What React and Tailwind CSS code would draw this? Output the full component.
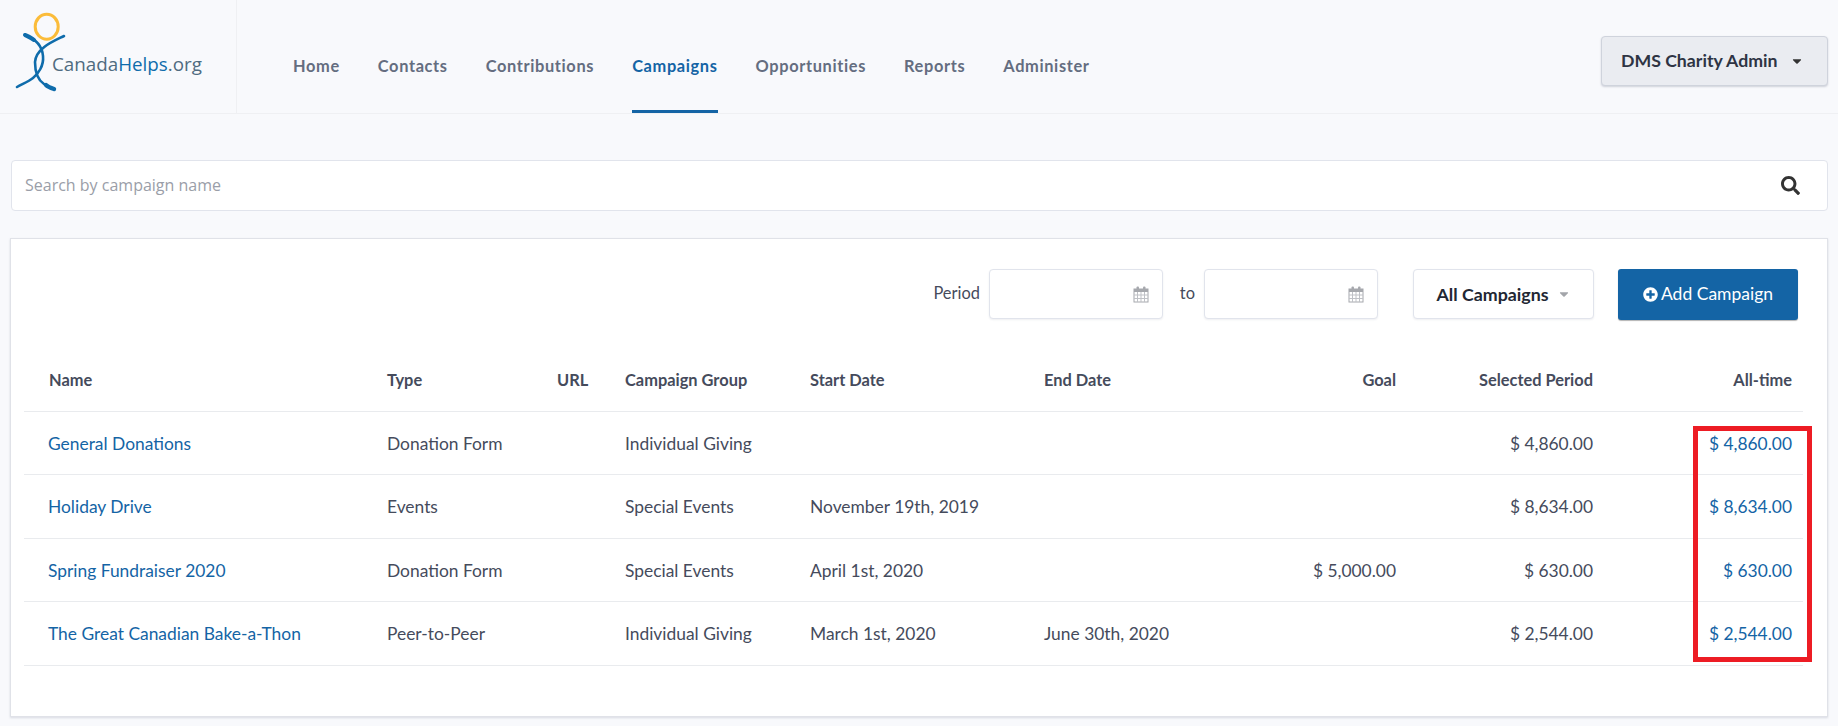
import { FaSearch, FaPlusCircle, FaCaretDown } from "react-icons/fa";

const navItems = ["Home", "Contacts", "Contributions", "Campaigns", "Opportunities", "Reports", "Administer"];

const rows = [
  { name: "General Donations", type: "Donation Form", group: "Individual Giving", start: "", end: "", goal: "", period: "$ 4,860.00", all: "$ 4,860.00" },
  { name: "Holiday Drive", type: "Events", group: "Special Events", start: "November 19th, 2019", end: "", goal: "", period: "$ 8,634.00", all: "$ 8,634.00" },
  { name: "Spring Fundraiser 2020", type: "Donation Form", group: "Special Events", start: "April 1st, 2020", end: "", goal: "$ 5,000.00", period: "$ 630.00", all: "$ 630.00" },
  { name: "The Great Canadian Bake-a-Thon", type: "Peer-to-Peer", group: "Individual Giving", start: "March 1st, 2020", end: "June 30th, 2020", goal: "", period: "$ 2,544.00", all: "$ 2,544.00" },
];

const Logo = () => (
  <div className="flex items-start">
    <svg width="70" height="100" viewBox="0 0 70 100" className="shrink-0" fill="none" strokeLinecap="round">
      <ellipse cx="46.7" cy="26.7" rx="11.5" ry="12.5" stroke="#fbbc3a" strokeWidth="3" />
      <path d="M25 35C33 38 42 44 43 56C44 66 38 74 33 78C28 82 22 84 17 87" stroke="#0f6cab" strokeWidth="2.6" />
      <path d="M64 36C54 41 36 48 35 62C35 72 38 80 44 84C47 86 50 88 54 89" stroke="#0f6cab" strokeWidth="2.6" />
      <path d="M25 35C28 36 31 38 34 40" stroke="#0f6cab" strokeWidth="4" />
      <path d="M46 85C48 87 51 88 54 89" stroke="#0f6cab" strokeWidth="4.4" />
    </svg>
    <span className="-ml-[18px] mt-[51px] font-['Open_Sans',sans-serif] text-[18.8px] leading-[26px] text-[#4f6b80]">
      Canada<span className="text-[#0f6cab]">Helps</span>.org
    </span>
  </div>
);

const Calendar = () => (
  <svg width="16" height="17" viewBox="0 0 16 17" className="shrink-0">
    <rect x="1" y="3" width="14" height="13" fill="none" stroke="#a6a8ad" strokeWidth="1" />
    <rect x="1" y="3" width="14" height="3" fill="#a6a8ad" />
    <rect x="3.5" y="0.5" width="2.5" height="4.5" rx="1" fill="#a6a8ad" />
    <rect x="10" y="0.5" width="2.5" height="4.5" rx="1" fill="#a6a8ad" />
    <path d="M1 9h14M1 12.5h14M4.5 6v10M8 6v10M11.5 6v10" stroke="#bfc1c6" strokeWidth="1" />
  </svg>
);

const DateInput = () => (
  <div className="flex h-[50px] w-[174px] items-center justify-end rounded-[4px] border border-[#e1e4ec] bg-white pr-[13px] shadow-[0_1px_2px_rgba(40,50,80,0.08)]">
    <Calendar />
  </div>
);

export default function App() {
  return (
    <div className="min-h-screen bg-[#f8f9fc] font-['Lato',sans-serif] text-[#454b5c]">
      {/* Header */}
      <header className="flex h-[114px] items-stretch border-b border-[#eff0f3]">
        <div className="w-[237px] shrink-0 border-r border-[#eff0f3]">
          <Logo />
        </div>
        <nav className="ml-[56px] flex gap-[38px]">
          {navItems.map((item) => (
            <a
              key={item}
              className={`flex h-[113px] items-center border-b-[3px] pt-[22px] text-[16.4px] font-bold tracking-[0.63px] ${
                item === "Campaigns" ? "border-[#1464a5] text-[#1464a5]" : "border-transparent text-[#646d80]"
              }`}
            >
              {item}
            </a>
          ))}
        </nav>
        <div className="ml-auto pr-[10px] pt-[36px]">
          <button className="flex h-[50px] w-[227px] items-center rounded-[4px] border border-[#cfd3dc] bg-[#eaecf1] pl-[19px] text-[17.7px] font-bold text-[#2e3444] shadow-[0_1px_2px_rgba(40,50,80,0.2)]">
            DMS Charity Admin
            <FaCaretDown className="ml-[12px] text-[14px] text-[#333]" />
          </button>
        </div>
      </header>

      <main className="px-[10px] pt-[46px]">
        {/* Search */}
        <div className="ml-[1px] flex h-[51px] items-center justify-between rounded-[4px] border border-[#e1e4ec] bg-white pl-[13px] pr-[27px]">
          <span className="pb-[2px] font-['Open_Sans',sans-serif] text-[16px] text-[#9a9ea8]">Search by campaign name</span>
          <FaSearch className="text-[19px] text-[#333]" />
        </div>

        {/* Campaigns panel */}
        <section className="mt-[27px] h-[479px] border border-[#e0e2e8] bg-white pl-[13px] pr-[24px] pt-[30px] shadow-[0_1px_2px_rgba(40,50,80,0.15)]">
          <div className="flex items-start justify-end pr-[5px]">
            <span className="mr-[9px] self-center pb-[2px] text-[16.4px]">Period</span>
            <DateInput />
            <span className="ml-[17px] mr-[9px] self-center pb-[2px] text-[16.4px]">to</span>
            <DateInput />
            <button className="ml-[35px] flex h-[50px] w-[181px] items-center justify-center rounded-[4px] border border-[#e1e4ec] bg-white text-[17.8px] font-bold text-[#222733] shadow-[0_1px_2px_rgba(40,50,80,0.08)]">
              All Campaigns
              <FaCaretDown className="ml-[8px] text-[14px] text-[#a3a5aa]" />
            </button>
            <button className="ml-[24px] flex h-[51px] w-[180px] items-center justify-center gap-[3px] rounded-[3px] bg-[#1464a5] text-[17.5px] text-white shadow-[0_1px_1px_rgba(0,0,0,0.3)]">
              <FaPlusCircle className="text-[15px]" />
              Add Campaign
            </button>
          </div>

          <div className="relative mt-[30px]">
            <table className="w-full table-fixed border-collapse text-left text-[17.4px]">
              <colgroup>
                <col className="w-[363px]" />
                <col className="w-[170px]" />
                <col className="w-[68px]" />
                <col className="w-[185px]" />
                <col className="w-[234px]" />
                <col className="w-[156px]" />
                <col className="w-[196px]" />
                <col className="w-[197px]" />
                <col className="w-[210px]" />
              </colgroup>
              <thead>
                <tr className="h-[61px] border-b border-[#e9ebee] text-[16.4px] font-bold">
                  <th className="pl-[25px]">Name</th>
                  <th>Type</th>
                  <th>URL</th>
                  <th>Campaign Group</th>
                  <th>Start Date</th>
                  <th>End Date</th>
                  <th className="text-right">Goal</th>
                  <th className="text-right">Selected Period</th>
                  <th className="pr-[11px] text-right">All-time</th>
                </tr>
              </thead>
              <tbody>
                {rows.map((r) => (
                  <tr key={r.name} className="h-[63.5px] border-b border-[#e9ebee] [&>td]:pt-[2px]">
                    <td className="pl-[24px] text-[#1464a5]">{r.name}</td>
                    <td>{r.type}</td>
                    <td></td>
                    <td>{r.group}</td>
                    <td>{r.start}</td>
                    <td>{r.end}</td>
                    <td className="text-right">{r.goal}</td>
                    <td className="text-right">{r.period}</td>
                    <td className="pr-[11px] text-right text-[#1464a5]">{r.all}</td>
                  </tr>
                ))}
              </tbody>
            </table>
            {/* annotation around the All-time column */}
            <div className="pointer-events-none absolute left-[1669px] top-[76px] h-[236px] w-[119px] border-[5px] border-[#ed1c24]" />
          </div>
        </section>
      </main>
    </div>
  );
}
